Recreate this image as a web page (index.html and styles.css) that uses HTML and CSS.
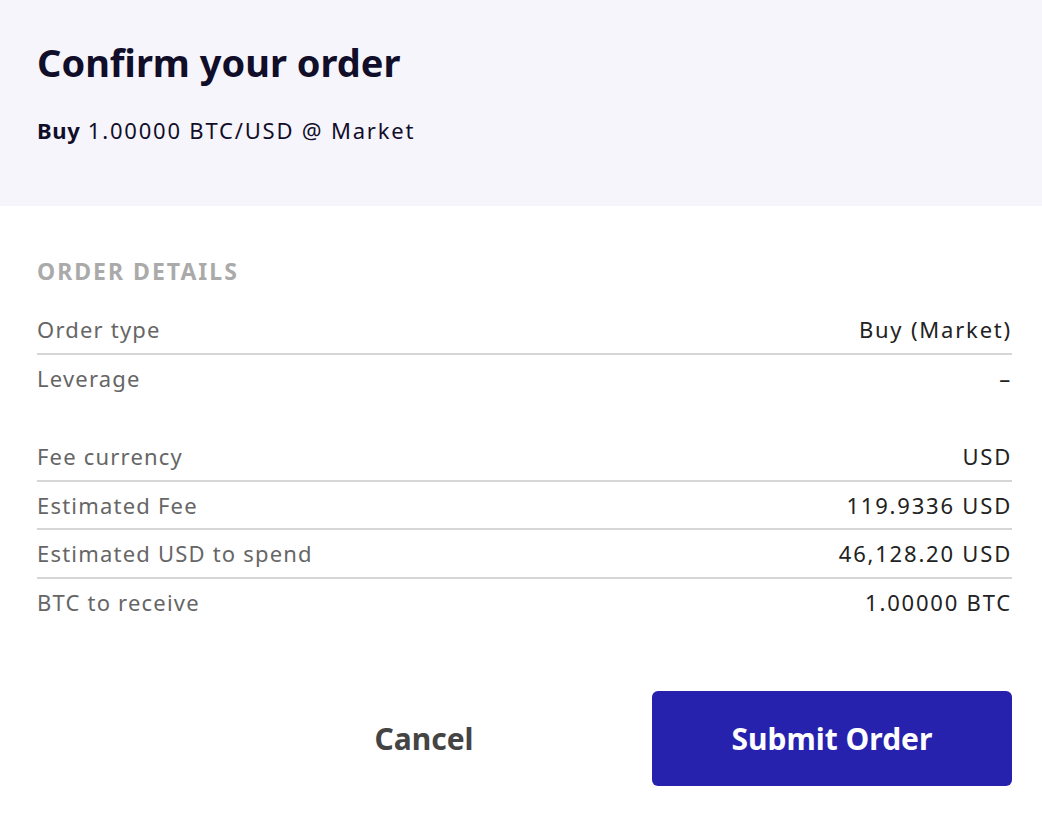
FILE: index.html
```html
<!DOCTYPE html>
<html>
<head>
<meta charset="utf-8">
<link rel="stylesheet" href="styles.css">
</head>
<body>
<div class="modal">
  <header class="head">
    <h1 class="title">Confirm your order</h1>
    <p class="summary"><b>Buy</b> 1.00000 BTC/USD @ Market</p>
  </header>
  <section class="details">
    <h2 class="section-label">ORDER DETAILS</h2>
    <div class="group">
      <div class="row"><span class="label">Order type</span><span class="value">Buy (Market)</span></div>
      <div class="row last"><span class="label">Leverage</span><span class="value">–</span></div>
    </div>
    <div class="group">
      <div class="row"><span class="label">Fee currency</span><span class="value">USD</span></div>
      <div class="row"><span class="label">Estimated Fee</span><span class="value">119.9336 USD</span></div>
      <div class="row"><span class="label">Estimated USD to spend</span><span class="value">46,128.20 USD</span></div>
      <div class="row last"><span class="label">BTC to receive</span><span class="value">1.00000 BTC</span></div>
    </div>
  </section>
  <footer class="actions">
    <button class="btn cancel">Cancel</button>
    <button class="btn submit">Submit Order</button>
  </footer>
</div>
</body>
</html>
```

FILE: styles.css
```css
html, body {
  margin: 0;
  padding: 0;
  background: #ffffff;
}
body {
  font-family: "Noto Sans", "Open Sans", sans-serif;
  color: #222;
}
.modal {
  width: 1042px;
}
.head {
  background: #f6f5fb;
  height: 206px;
  box-sizing: border-box;
  padding: 36px 30px 0 37px;
}
.title {
  margin: 0;
  font-size: 38px;
  line-height: 52px;
  font-weight: 700;
  color: #110e2a;
  letter-spacing: 0;
}
.summary {
  margin: 27px 0 0;
  font-size: 22px;
  line-height: 30px;
  color: #110e2a;
  letter-spacing: 1.8px;
}
.summary b {
  font-weight: 700;
  letter-spacing: 0.6px;
}
.details {
  padding: 48px 30px 0 37px;
}
.section-label {
  margin: 0 0 18px;
  font-size: 23px;
  line-height: 34px;
  font-weight: 700;
  color: #aaaaaa;
  letter-spacing: 2px;
}
.group {
  margin-bottom: 32px;
}
.row {
  display: flex;
  justify-content: space-between;
  align-items: center;
  height: 46.5px;
  border-bottom: 2px solid #d6d6d6;
  font-size: 22px;
  letter-spacing: 1.2px;
}
.row.last {
  border-bottom: none;
}
.label {
  color: #666666;
}
.value {
  color: #222222;
  letter-spacing: 1.8px;
}
.actions {
  display: flex;
  justify-content: flex-end;
  padding: 34px 30px 0 0;
}
.btn {
  font-family: inherit;
  font-size: 30px;
  font-weight: 700;
  height: 95px;
  border: none;
  border-radius: 6px;
  cursor: pointer;
}
.cancel {
  width: 456px;
  background: transparent;
  color: #444444;
}
.submit {
  width: 360px;
  background: #2722ad;
  color: #ffffff;
}
```
